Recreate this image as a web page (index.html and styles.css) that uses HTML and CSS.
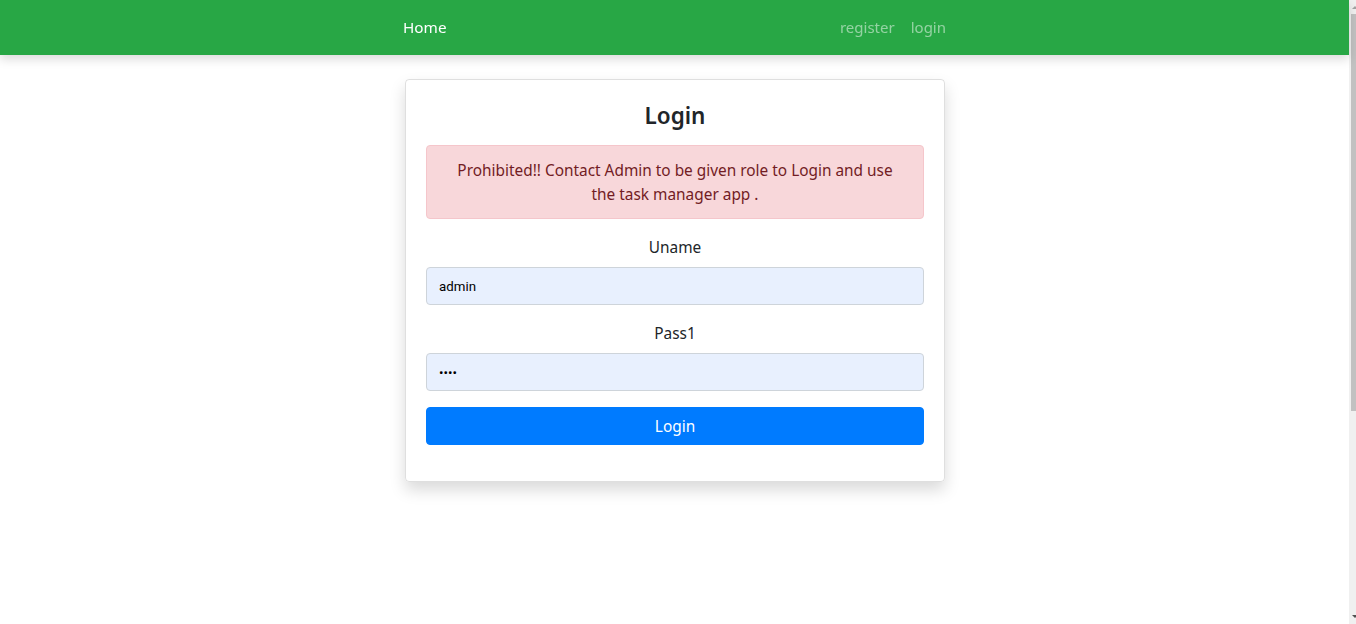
FILE: index.html
```html
<!DOCTYPE html>
<html>
<head>
<meta charset="utf-8">
<link rel="stylesheet" href="styles.css">
</head>
<body>
<div class="page">
  <nav class="navbar">
    <div class="nav-inner">
      <a class="brand">Home</a>
      <div class="nav-links">
        <a class="nav-link">register</a>
        <a class="nav-link">login</a>
      </div>
    </div>
  </nav>
  <main class="main">
    <div class="card">
      <h3 class="title">Login</h3>
      <div class="alert">Prohibited!! Contact Admin to be given role to Login and use the task manager app .</div>
      <form class="form">
        <div class="group">
          <label class="label">Uname</label>
          <input class="input" type="text" value="admin">
        </div>
        <div class="group">
          <label class="label">Pass1</label>
          <input class="input" type="password" value="pass">
        </div>
        <button class="btn" type="button">Login</button>
      </form>
    </div>
  </main>
</div>
<div class="scrollbar">
  <span class="arrow arrow-up"></span>
  <div class="thumb"></div>
  <span class="arrow arrow-down"></span>
</div>
</body>
</html>
```
FILE: styles.css
```css
* { box-sizing: border-box; }
html, body { margin: 0; padding: 0; height: 100%; overflow: hidden; }
body {
  font-family: "Noto Sans", "Open Sans", sans-serif;
  font-size: 16px;
  line-height: 24px;
  color: #212529;
  background: #fff;
}
.page { width: 1349px; }
.navbar {
  background: #28a745;
  height: 55px;
  box-shadow: 0 4px 10px rgba(0,0,0,0.15);
  position: relative;
  z-index: 1;
}
.nav-inner {
  width: 545px;
  margin: 0 auto;
  padding: 0 1px 2px;
  height: 55px;
  display: flex;
  align-items: center;
  justify-content: space-between;
}
.brand { color: #fff; font-size: 15.3px; }
.nav-links { display: flex; gap: 16px; }
.nav-link { color: rgba(255,255,255,0.5); font-size: 15px; }
.main { display: flex; justify-content: center; padding-top: 24px; }
.card {
  width: 540px;
  margin-left: 1px;
  border: 1px solid rgba(0,0,0,0.125);
  border-radius: 4px;
  box-shadow: 0 8px 16px rgba(0,0,0,0.15);
  padding: 20px 20px 20px;
  text-align: center;
}
.title {
  margin: 0 0 16px;
  padding-top: 2px;
  font-size: 22.5px;
  font-weight: 600;
  line-height: 27px;
  height: 29px;
  color: #212529;
}
.alert {
  background: #f8d7da;
  border: 1px solid #f5c6cb;
  color: #721c24;
  border-radius: 4px;
  padding: 13px 20px 11px;
  margin-bottom: 16px;
  font-size: 15.4px;
  line-height: 24px;
}
.form { margin: 0 0 16px; }
.group { margin-bottom: 16px; }
.label {
  display: block;
  margin-bottom: 8px;
  font-size: 15.4px;
  height: 24px;
  padding-top: 1px;
  line-height: 23px;
}
.input {
  display: block;
  width: 100%;
  height: 38px;
  padding: 6px 12px;
  border: 1px solid #ced4da;
  border-radius: 4px;
  background: #e8f0fe;
  font-family: "Roboto", "Liberation Sans", sans-serif;
  font-size: 13.3px;
  color: #000;
  outline: none;
}
.btn {
  display: block;
  width: 100%;
  height: 38px;
  border: 1px solid #007bff;
  border-radius: 4px;
  background: #007bff;
  color: #fff;
  font-family: "Noto Sans", "Open Sans", sans-serif;
  font-size: 15.4px;
  line-height: 24px;
  padding: 2px 0 0;
}
.scrollbar {
  position: fixed;
  top: 0;
  right: 0;
  width: 7px;
  height: 624px;
  background: #f0f0f0;
}
.thumb {
  position: absolute;
  left: 2px;
  top: 14px;
  width: 5px;
  height: 397px;
  background: #c1c1c1;
}
.arrow {
  position: absolute;
  left: 3px;
  width: 0; height: 0;
  border-left: 3px solid transparent;
  border-right: 3px solid transparent;
}
.arrow-up { top: 6px; border-bottom: 3px solid #a3a3a3; }
.arrow-down { bottom: 6px; border-top: 3px solid #505050; }
```
